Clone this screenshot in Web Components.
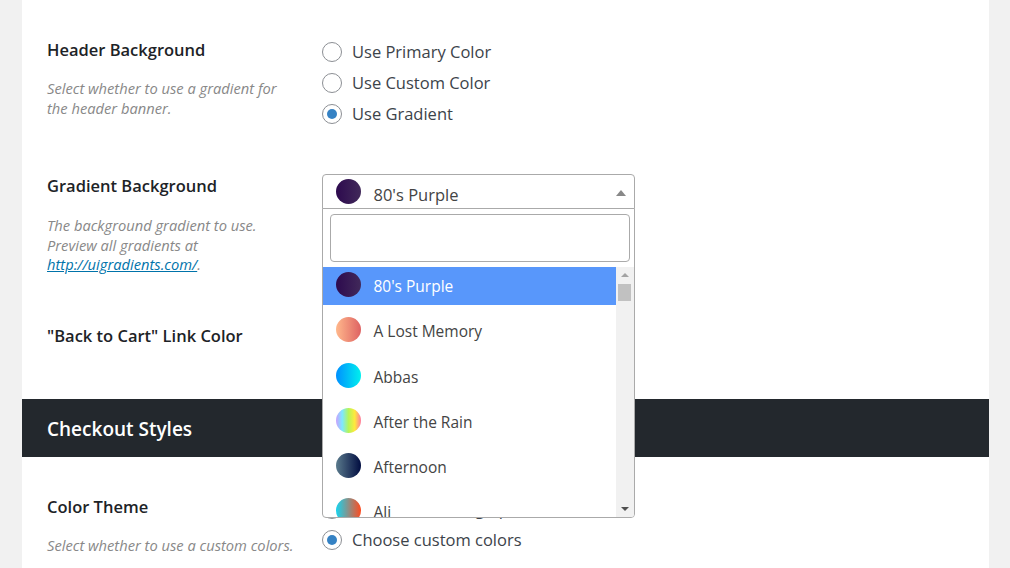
<!DOCTYPE html>
<html>
<head>
<meta charset="utf-8">
<title>Checkout settings</title>
<style>
  html, body { margin: 0; height: 568px; overflow: hidden; background: #f1f1f1; }
  body { font-family: "Open Sans", "Liberation Sans", sans-serif; }
</style>
</head>
<body>
<settings-page>
  <setting-row title-text="Header Background" style="--after:44.5px">
    <span slot="desc">Select whether to use a gradient for the header banner.</span>
    <radio-option>Use Primary Color</radio-option>
    <radio-option>Use Custom Color</radio-option>
    <radio-option checked>Use Gradient</radio-option>
  </setting-row>
  <setting-row title-text="Gradient Background" style="--desc-gap:18px;--desc-line:19.6px;--radio-top:0;--after:49px">
    <span slot="desc">The background gradient to use. Preview all gradients at <a href="#" style="color:#0073aa">http://uigradients.com/</a>.</span>
    <gradient-select></gradient-select>
  </setting-row>
  <setting-row title-text="&quot;Back to Cart&quot; Link Color" style="--desc-gap:0;--after:51px"></setting-row>
  <section-band>Checkout Styles</section-band>
  <setting-row title-text="Color Theme" style="--desc-gap:16px;--before:38px;--radio-top:-1px">
    <span slot="desc">Select whether to use a custom colors.</span>
    <radio-option>Use default design palette</radio-option>
    <radio-option checked>Choose custom colors</radio-option>
  </setting-row>
</settings-page>

<script>
class SettingsPage extends HTMLElement {
  constructor() {
    super();
    this.attachShadow({ mode: 'open' }).innerHTML = `
      <style>
        :host { display: block; margin: 0 21px 0 22px; background: #fff; padding-top: 38px; min-height: 530px; }
      </style>
      <slot></slot>`;
  }
}

class SettingRow extends HTMLElement {
  constructor() {
    super();
    this.attachShadow({ mode: 'open' }).innerHTML = `
      <style>
        :host {
          display: grid;
          grid-template-columns: 275px 1fr;
          padding: var(--before, 0) 25px var(--after, 0);
        }
        h3 { margin: 0; font-size: 16.5px; line-height: 24px; font-weight: 600; color: #1d2327; }
        p {
          margin: var(--desc-gap, 16px) 0 0;
          width: 250px;
          font-size: 14.7px;
          line-height: var(--desc-line, 20px);
          font-style: italic;
          color: #888;
        }
        .controls { margin-top: var(--radio-top, -1.5px); }
      </style>
      <div>
        <h3></h3>
        <p><slot name="desc"></slot></p>
      </div>
      <div class="controls"><slot></slot></div>`;
    this.shadowRoot.querySelector('h3').textContent = this.getAttribute('title-text');
  }
}

class RadioOption extends HTMLElement {
  constructor() {
    super();
    this.attachShadow({ mode: 'open' }).innerHTML = `
      <style>
        :host {
          display: flex;
          align-items: center;
          gap: 10px;
          height: 31px;
          font-size: 16.5px;
          color: #3c434a;
        }
        .dot {
          box-sizing: border-box;
          width: 20px;
          height: 20px;
          flex: none;
          display: flex;
          align-items: center;
          justify-content: center;
          border: 1px solid #8c8f94;
          border-radius: 50%;
          background: #fff;
        }
        :host([checked]) .dot::before {
          content: '';
          width: 10px;
          height: 10px;
          border-radius: 50%;
          background: #3582c4;
        }
        .label { margin-top: -2px; }
      </style>
      <span class="dot"></span><span class="label"><slot></slot></span>`;
  }
}

class SectionBand extends HTMLElement {
  constructor() {
    super();
    this.attachShadow({ mode: 'open' }).innerHTML = `
      <style>
        :host {
          display: flex;
          align-items: center;
          box-sizing: border-box;
          height: 58px;
          padding: 2px 0 0 25px;
          background: #23282d;
          color: #fff;
          font-size: 19px;
          font-weight: 600;
        }
      </style>
      <slot></slot>`;
  }
}

class GradientOption extends HTMLElement {
  constructor() {
    super();
    this.attachShadow({ mode: 'open' }).innerHTML = `
      <style>
        :host {
          display: flex;
          flex: none;
          align-items: flex-start;
          height: 38.25px;
          padding: 5px 0 0 13px;
          box-sizing: border-box;
          font-size: 15.5px;
          color: #444;
        }
        :host([selected]) { background: #5897fb; color: #fff; }
        .swatch {
          width: 25px;
          height: 25px;
          flex: none;
          margin-right: 12.5px;
          border-radius: 50%;
        }
        .name { line-height: 29px; white-space: nowrap; }
      </style>
      <span class="swatch"></span><span class="name"><slot></slot></span>`;
  }

  connectedCallback() {
    this.shadowRoot.querySelector('.swatch').style.background = this.getAttribute('gradient');
  }
}

const GRADIENTS = [
  ["80's Purple", 'linear-gradient(to right, #2d0a4e, #41295a)'],
  ['A Lost Memory', 'linear-gradient(to right, #ffb88c, #de6262)'],
  ['Abbas', 'linear-gradient(to right, #0090ff, #00f0ee)'],
  ['After the Rain', 'linear-gradient(to right, #c9a0ff, #7de8ff, #b5f55a, #ffe93c, #ff7ba0)'],
  ['Afternoon', 'linear-gradient(to right, #5a7a8c, #000c40)'],
  ['Ali', 'linear-gradient(to right, #17d4ef, #ff4b1f)']
];

class GradientSelect extends HTMLElement {
  constructor() {
    super();
    this.attachShadow({ mode: 'open' }).innerHTML = `
      <style>
        :host { display: block; position: relative; width: 313px; height: 35px; color: #444; }
        .head {
          box-sizing: border-box;
          height: 35px;
          display: flex;
          align-items: flex-start;
          padding: 4px 0 0 13px;
          background: #fff;
          border: 1px solid #aaa;
          border-radius: 4px 4px 0 0;
          font-size: 16.5px;
        }
        .swatch {
          width: 25px;
          height: 25px;
          flex: none;
          margin-right: 12.5px;
          border-radius: 50%;
          background: linear-gradient(to right, #2d0a4e, #41295a);
        }
        .value { line-height: 31px; }
        .arrow {
          position: absolute;
          right: 9px;
          top: 16px;
          width: 0;
          height: 0;
          border: 5px solid transparent;
          border-top: 0;
          border-bottom: 6px solid #888;
        }
        .panel {
          position: absolute;
          z-index: 2;
          top: 34px;
          left: 0;
          right: 0;
          box-sizing: border-box;
          height: 310px;
          display: flex;
          flex-direction: column;
          background: #fff;
          border: 1px solid #aaa;
          border-radius: 0 0 4px 4px;
          overflow: hidden;
        }
        .search { padding: 5px 4px 5px 7px; flex: none; }
        input {
          display: block;
          box-sizing: border-box;
          width: 100%;
          height: 48px;
          border: 1px solid #aaa;
          border-radius: 4px;
          outline: none;
        }
        .body { flex: 1; min-height: 0; display: flex; }
        .list { flex: 1; min-width: 0; display: flex; flex-direction: column; gap: 7px; overflow: hidden; }
        .bar {
          position: relative;
          width: 18px;
          flex: none;
          background: #f1f1f1;
        }
        .thumb { position: absolute; left: 2px; top: 17px; width: 13px; height: 17px; background: #c1c1c1; }
        .up, .down { position: absolute; left: 5px; width: 0; height: 0; border: 4px solid transparent; }
        .up { top: 6px; border-top: 0; border-bottom: 4px solid #a3a3a3; }
        .down { bottom: 6px; border-bottom: 0; border-top: 4px solid #505050; }
      </style>
      <div class="head">
        <span class="swatch"></span><span class="value">80's Purple</span><span class="arrow"></span>
      </div>
      <div class="panel">
        <div class="search"><input type="text"></div>
        <div class="body">
          <div class="list"></div>
          <div class="bar"><span class="up"></span><span class="thumb"></span><span class="down"></span></div>
        </div>
      </div>`;
    const list = this.shadowRoot.querySelector('.list');
    GRADIENTS.forEach(([name, gradient], i) => {
      const opt = document.createElement('gradient-option');
      opt.setAttribute('gradient', gradient);
      if (i === 0) opt.setAttribute('selected', '');
      opt.textContent = name;
      list.appendChild(opt);
    });
  }
}

customElements.define('settings-page', SettingsPage);
customElements.define('setting-row', SettingRow);
customElements.define('radio-option', RadioOption);
customElements.define('section-band', SectionBand);
customElements.define('gradient-option', GradientOption);
customElements.define('gradient-select', GradientSelect);
</script>
</body>
</html>
